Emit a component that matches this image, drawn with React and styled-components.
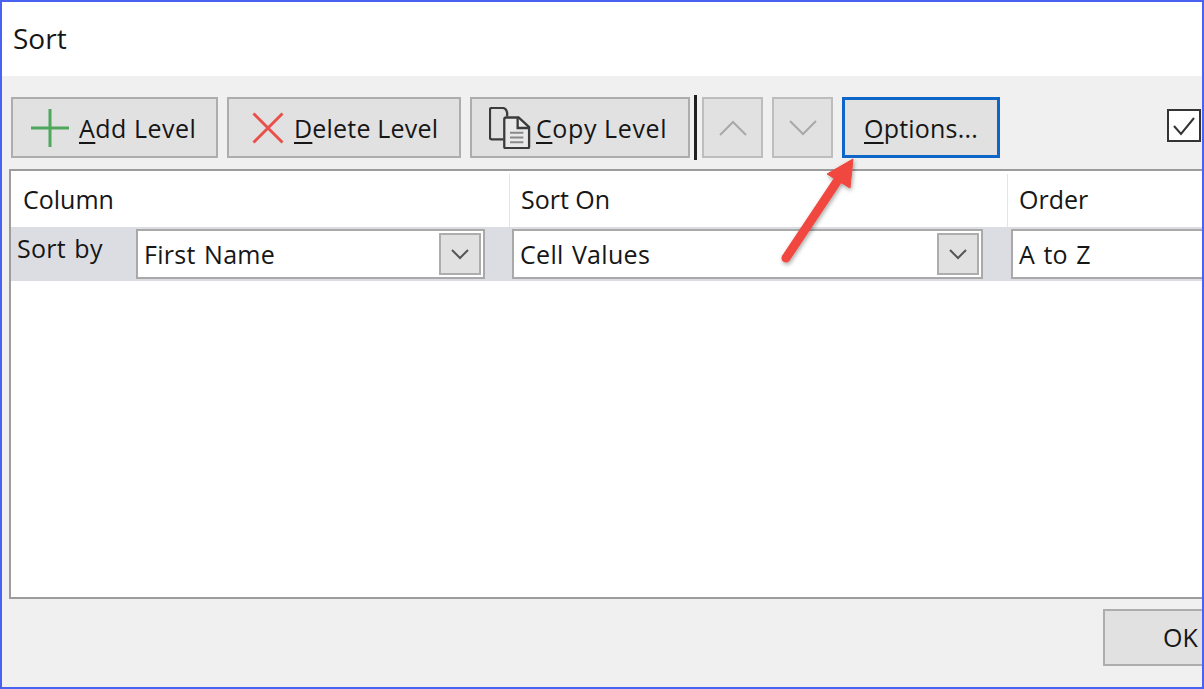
import React from 'react';
import styled, { createGlobalStyle } from 'styled-components';

const GlobalStyle = createGlobalStyle`
  html, body {
    margin: 0;
    padding: 0;
    background: #f0f0f0;
  }
  body {
    font-family: "Open Sans", "Noto Sans", "Liberation Sans", sans-serif;
    color: #161616;
  }
`;

const Frame = styled.div`
  position: relative;
  width: 1204px;
  height: 689px;
  box-sizing: border-box;
  border: 2px solid #4a62f2;
  background: #f0f0f0;
  overflow: hidden;
`;

const TitleBar = styled.div`
  height: 74px;
  background: #fff;
  padding-left: 11px;
  box-sizing: border-box;
  font-size: 28px;
  line-height: 72px;
`;

const Toolbar = styled.div`
  display: flex;
  align-items: stretch;
  gap: 9px;
  height: 61px;
  margin-top: 21px;
  padding-left: 9px;
`;

const Button = styled.div`
  display: flex;
  align-items: center;
  justify-content: ${p => (p.$center ? 'center' : 'flex-start')};
  flex: none;
  box-sizing: border-box;
  width: ${p => p.$w}px;
  padding-left: ${p => p.$pad || 0}px;
  gap: ${p => p.$gap || 0}px;
  background: #e1e1e1;
  border: ${p => (p.$focus ? '3px solid #0e66c8' : `2px solid ${p.$muted ? '#bdbdbd' : '#adadad'}`)};
  font-size: 25px;
  letter-spacing: ${p => p.$track || 0.2}px;
  white-space: nowrap;
`;

const Key = styled.span`
  text-decoration: underline;
  text-underline-offset: 4px;
  text-decoration-thickness: 2px;
`;

const Separator = styled.div`
  flex: none;
  width: 3px;
  height: 65px;
  margin: -2px -4px 0 -5px;
  background: #1f1f1f;
`;

const CheckBox = styled.div`
  flex: none;
  display: flex;
  align-items: center;
  justify-content: center;
  box-sizing: border-box;
  width: 34px;
  height: 33px;
  margin: 12px 0 0 158px;
  background: #fff;
  border: 2px solid #333;
`;

const List = styled.div`
  box-sizing: border-box;
  width: 1230px;
  height: 430px;
  margin: 11px 0 0 7px;
  background: #fff;
  border: 2px solid #9c9c9c;
`;

const HeaderRow = styled.div`
  display: grid;
  grid-template-columns: 498px 498px 1fr;
  height: 56px;
`;

const HeaderCell = styled.div`
  box-sizing: border-box;
  padding: 9px 0 0 ${p => (p.$first ? 12 : 11)}px;
  margin-top: 3px;
  font-size: 25px;
  line-height: 32px;
  border-left: ${p => (p.$first ? 'none' : '1px solid #e4e4e4')};
`;

const Row = styled.div`
  display: grid;
  grid-template-columns: 123px 349px 27px 471px 28px 1fr;
  align-items: center;
  height: 54px;
  padding-left: 2px;
  background: #dcdde3;
`;

const RowLabel = styled.div`
  align-self: start;
  padding: 3px 0 0 4px;
  font-size: 25px;
  line-height: 36px;
  letter-spacing: 0.3px;
  word-spacing: 1.5px;
`;

const Combo = styled.div`
  display: flex;
  align-items: center;
  justify-content: space-between;
  box-sizing: border-box;
  height: 50px;
  padding: 0 2px 0 6px;
  background: #fff;
  border: 2px solid #a9a9a9;
  font-size: 25px;
  letter-spacing: 0.3px;
  word-spacing: 1.5px;
`;

const ComboButton = styled.div`
  display: flex;
  align-items: center;
  justify-content: center;
  box-sizing: border-box;
  width: 42px;
  height: 42px;
  background: #e1e1e1;
  border: 2px solid #adadad;
`;

const Footer = styled.div`
  display: flex;
  margin-top: 10px;
  padding-left: 1101px;
`;

const OkButton = styled.div`
  flex: none;
  box-sizing: border-box;
  width: 160px;
  height: 57px;
  padding-left: 58px;
  background: #e1e1e1;
  border: 2px solid #adadad;
  font-size: 25px;
  line-height: 53px;
`;

const ArrowOverlay = styled.svg`
  position: absolute;
  left: -2px;
  top: -2px;
  pointer-events: none;
`;

const Chevron = ({ up, color = '#555', size = 30 }) => (
  <svg width={size} height={size * 0.6} viewBox="0 0 30 18" fill="none">
    <path d={up ? 'M2 16 L15 3 L28 16' : 'M2 2 L15 15 L28 2'} stroke={color} strokeWidth="2" />
  </svg>
);

const ComboChevron = () => (
  <svg width="20" height="12" viewBox="0 0 20 12" fill="none">
    <path d="M2 2 L10 10 L18 2" stroke="#555" strokeWidth="2" />
  </svg>
);

const PlusIcon = () => (
  <svg width="38" height="38" viewBox="0 0 38 38" fill="none">
    <path d="M19 0 V38 M0 19 H38" stroke="#4ea75c" strokeWidth="3" />
  </svg>
);

const CrossIcon = () => (
  <svg width="32" height="32" viewBox="0 0 32 32" fill="none">
    <path d="M1.5 1.5 L30.5 30.5 M30.5 1.5 L1.5 30.5" stroke="#e8504c" strokeWidth="3" />
  </svg>
);

const CopyIcon = () => (
  <svg width="42" height="42" viewBox="0 0 44 44" fill="none" stroke="#3c3c3c" strokeWidth="2.4">
    <path d="M15 34 H3 Q1 34 1 32 V3 Q1 1 3 1 H14 Q18 1 19 6 V10" />
    <path d="M17 43 Q16 43 16 42 V13 Q16 11 18 11 H31 L42 21 V42 Q42 43 41 43 Z" fill="#e9e9e9" />
    <path d="M30 11 V22 H42" />
    <path d="M22 27 H36 M22 32 H36 M22 37 H36" stroke="#8a8a8a" strokeWidth="2.2" />
  </svg>
);

const App = () => (
  <Frame>
    <GlobalStyle />
    <TitleBar>Sort</TitleBar>
    <Toolbar>
      <Button $w={207} $pad={18} $gap={10} $track={0.5}>
        <PlusIcon />
        <span><Key>A</Key>dd Level</span>
      </Button>
      <Button $w={234} $pad={23} $gap={10}>
        <CrossIcon />
        <span><Key>D</Key>elete Level</span>
      </Button>
      <Button $w={220} $pad={17} $gap={5} $track={0.6}>
        <CopyIcon />
        <span><Key>C</Key>opy Level</span>
      </Button>
      <Separator />
      <Button $w={61} $center $muted><Chevron up color="#a8a8a8" /></Button>
      <Button $w={61} $center $muted><Chevron color="#a8a8a8" /></Button>
      <Button $w={158} $center $focus><span><Key>O</Key>ptions...</span></Button>
      <CheckBox>
        <svg width="24" height="20" viewBox="0 0 24 20" fill="none">
          <path d="M2 10 L9 18 L22 2" stroke="#333" strokeWidth="2" />
        </svg>
      </CheckBox>
    </Toolbar>
    <List>
      <HeaderRow>
        <HeaderCell $first>Column</HeaderCell>
        <HeaderCell>Sort On</HeaderCell>
        <HeaderCell>Order</HeaderCell>
      </HeaderRow>
      <Row>
        <RowLabel>Sort by</RowLabel>
        <Combo>First Name<ComboButton><ComboChevron /></ComboButton></Combo>
        <span />
        <Combo>Cell Values<ComboButton><ComboChevron /></ComboButton></Combo>
        <span />
        <Combo>A to Z</Combo>
      </Row>
    </List>
    <Footer>
      <OkButton>OK</OkButton>
    </Footer>
    <ArrowOverlay width="1204" height="689" viewBox="0 0 1204 689">
      <defs>
        <filter id="arrowShadow" x="-30%" y="-30%" width="160%" height="160%">
          <feDropShadow dx="1" dy="2" stdDeviation="2" floodColor="#000" floodOpacity="0.35" />
        </filter>
      </defs>
      <g filter="url(#arrowShadow)">
        <path d="M786 258 L838 180" stroke="#f0473f" strokeWidth="9" strokeLinecap="round" />
        <path d="M853 159 L827 174 L850 188 Z" fill="#f0473f" stroke="#f0473f" strokeWidth="1" strokeLinejoin="round" />
      </g>
    </ArrowOverlay>
  </Frame>
);

export default App;
